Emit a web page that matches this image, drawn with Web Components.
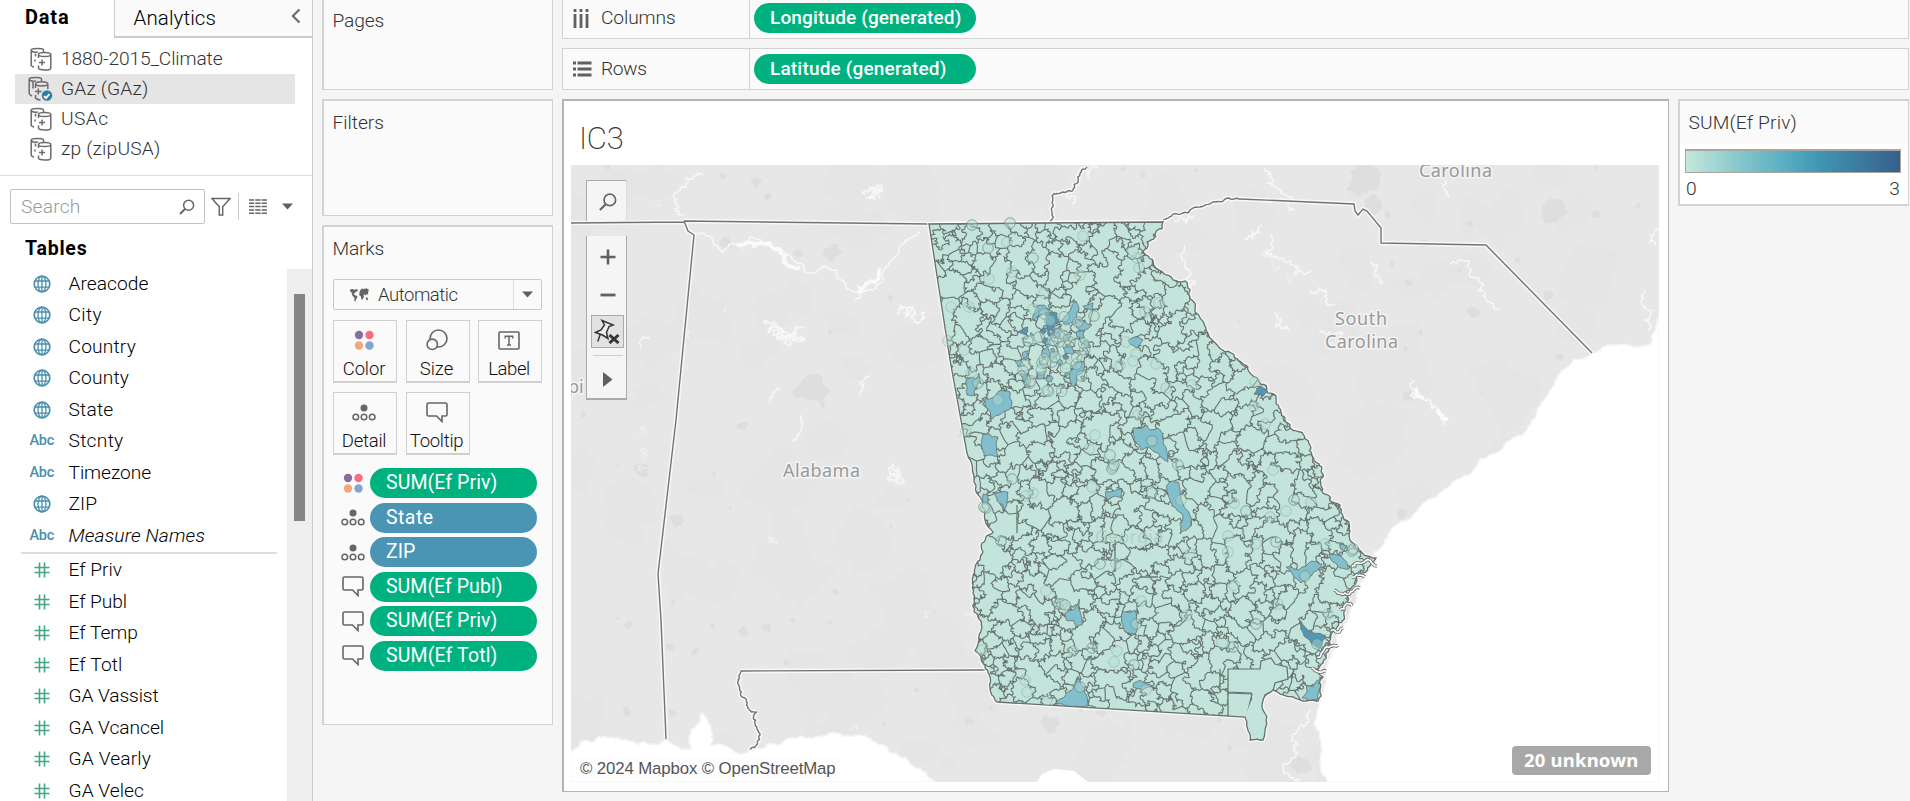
<!DOCTYPE html>
<html lang="en">
<head>
<meta charset="utf-8">
<title>IC3</title>
<style>
html,body{margin:0;height:801px;overflow:hidden;background:#f5f5f5}
body{font-family:Roboto,"Liberation Sans",sans-serif;font-weight:300;font-size:19.2px;color:#333}
</style>
</head>
<body>
<work-book></work-book>
<script>
const define = (name, html, setup) => customElements.define(name, class extends HTMLElement {
  connectedCallback() {
    if (this.shadowRoot) return;
    const root = this.attachShadow({mode: 'open'});
    const t = document.createElement('template');
    t.innerHTML = typeof html === 'function' ? html(this) : html;
    root.append(t.content.cloneNode(true));
    if (setup) setup(this, root);
  }
});

/* Text spaced out to a given width */
define('fit-text', e => `<style>:host{display:inline-block;white-space:pre;line-height:30px}</style><span>${e.getAttribute('text')}</span>`, (e, r) => {
  const s = r.querySelector('span'), w = +e.getAttribute('w');
  const n = e.getAttribute('text').length, now = s.getBoundingClientRect().width;
  if (w && now) s.style.letterSpacing = ((w + 1.5 - now) / n).toFixed(3) + 'px';
});

const globe = '<g fill="none" stroke="#4a8fae" stroke-width="1.3"><circle cx="9" cy="9" r="7.8" stroke-width="1.7"/><ellipse cx="9" cy="9" rx="4" ry="7.8"/><path d="M9 1v16M1.500 6h15M1.500 12.200h15"/></g>';
const dots4 = '<circle cx="5" cy="5" r="4.200" fill="#85709b"/><circle cx="15.500" cy="5" r="4.200" fill="#f96d80"/><circle cx="5" cy="15.500" r="4.200" fill="#f5a77c"/><circle cx="15.500" cy="15.500" r="4.200" fill="#82a6cd"/>';
const ICONS = {
  db: [22, 24, '<g fill="none" stroke="#6b6b6b" stroke-width="1.5"><path d="M4 20C2 19.500 1.200 19 1.200 18V3C1.200 .9 13.500 .9 13.500 3V5M1.200 3c0 2.300 5.300 2.600 7 1.900M5.500 6.500v3M5 12.500v2"/><path d="M8.500 11V7.500c0-2.700 12.300-2.700 12.300 0v13.700c0 2.400-12.300 2.400-12.300 0V18.500M8.500 7.500c0 2.700 12.300 2.700 12.300 0"/><path d="M9 15.500h6M12 12.500v6"/></g>'],
  dbon: [26, 26, '<g fill="none" stroke="#6b6b6b" stroke-width="1.500"><path d="M4 20C2 19 1.200 18.500 1.200 17.500V3C1.200 .9 13.500 .9 13.500 3V5M1.200 3c0 2.300 5.300 2.600 7 1.900M5 5.500v7"/><path d="M7.500 12V8c0-3 12.300-3 12.300 0v5M7.500 8c0 2.500 12.300 2.500 12.300 0M7.500 19v3c1 1.500 3 1.800 5 2"/><path d="M7 15.500h6.500M10.300 12.500v6"/></g><circle cx="19" cy="19.500" r="5.200" fill="#2f7ea4"/><path d="M16 20l2 2.200 3.500-4.200" fill="none" stroke="#fff" stroke-width="1.800"/>'],
  globe: [18, 18, globe],
  hash: [16, 16, '<path d="M5.500 .5v15M10.500 .5v15M.5 5.500h15M.5 10.500h15" stroke="#45a584" stroke-width="1.600"/>'],
  search: [16, 16, '<circle cx="9.600" cy="6.200" r="5" fill="none" stroke="#666" stroke-width="1.500"/><path d="M6 10L1 15" stroke="#666" stroke-width="2"/>'],
  funnel: [20, 20, '<path d="M1 1.500h18l-7.300 8.300V18H8.300V9.800z" fill="none" stroke="#666" stroke-width="1.500"/>'],
  list: [18, 15, '<path d="M0 1h18M0 4.300h18M0 7.600h18M0 10.900h18M0 14.200h18" stroke="#666" stroke-width="1.500" stroke-dasharray="5.300 1"/>'],
  caret: [11, 7, '<path d="M0 .5h11L5.500 6.500z" fill="#606060"/>'],
  back: [10, 16, '<path d="M8.500 1.500L1.800 8l6.700 6.500" fill="none" stroke="#666" stroke-width="2"/>'],
  cols: [16, 19, '<path d="M2 0v3M8 0v3M14 0v3M2 5v14M8 5v14M14 5v14" stroke="#606060" stroke-width="2.800"/>'],
  rows: [19, 16, '<path d="M0 2h3M4.500 2h14M0 8h3M4.500 8h14M0 14h3M4.500 14h14" stroke="#606060" stroke-width="2.800"/>'],
  world: [19, 14, '<path d="M0 1.500l2.500-.5 2 .8L7 1l1 1-1 1.500-1.500.5-.8 1.500-1-.2.5 1.500 1.800.8 1.500 1-.5 1.700-1 1-.6 2.400-.9-.5-.3-4L2.500 8 1.500 4.500 0 3zM9.500 4.500l.5-2 2-2L14 1l2.500-.8L19 2l-1 2 .3 1.700L17 7l-1-1.200L15.500 8 14.500 6.200 13.500 7 14 8.500l-1.500 3-1 .3-.7-3.500-1.600-1zM15.500 9.800l2-.3.8 2-1.500 1z" fill="#666"/>'],
  color: [21, 21, dots4],
  size: [22, 22, '<g fill="#fafafa" stroke="#666" stroke-width="1.600"><circle cx="12.500" cy="9.500" r="8.500"/><circle cx="6.300" cy="15.300" r="5.200"/></g>'],
  label: [22, 19, '<rect x="1" y="1" width="20" height="17" rx="1" fill="none" stroke="#666" stroke-width="1.600"/><path d="M7.300 7.500V5.200h7.400v2.300M11 5.200v8.600M9 14h4" fill="none" stroke="#666" stroke-width="1.500"/>'],
  detail: [24, 17, '<circle cx="12" cy="4" r="3.500" fill="#666"/><g fill="none" stroke="#666" stroke-width="1.500"><circle cx="3.800" cy="13" r="2.800"/><circle cx="12" cy="13" r="2.800"/><circle cx="20.200" cy="13" r="2.800"/></g>'],
  tip: [22, 21, '<path d="M2.500 1h17c1 0 1.500.5 1.500 1.500v10c0 1-.5 1.500-1.500 1.500H16v5.500L10.500 14h-8C1.500 14 1 13.500 1 12.500v-10C1 1.500 1.500 1 2.500 1z" fill="none" stroke="#666" stroke-width="1.600"/>'],
  plus: [16, 16, '<path d="M8 .5v15M.5 8h15" stroke="#606060" stroke-width="2.600"/>'],
  minus: [16, 4, '<path d="M.5 2h15" stroke="#606060" stroke-width="2.800"/>'],
  play: [10, 15, '<path d="M0 0l9.500 7.500L0 15z" fill="#606060"/>'],
  pin: [26, 25, '<path d="M8 1.500l11 4.500-4 1.500-2.500 6 1.500 6-5.500-3.500-7-2.500 5.500-2.500 3.500-5zM6.500 14.500L3.800 22.500" fill="#eee" stroke="#333" stroke-width="1.500"/><path d="M15.500 16l9 8M24.500 16l-9 8" stroke="#333" stroke-width="3"/>']
};
define('glyph-icon', e => {
  const [w, h, p] = ICONS[e.getAttribute('name')];
  return `<style>:host{display:inline-flex;flex:none}svg{display:block}</style><svg width="${w}" height="${h}" viewBox="0 0 ${w} ${h}">${p}</svg>`;
});

/* ---- Data pane ---- */
define('source-row', e => `<style>
:host{display:flex;align-items:center;height:30px;margin:0 17px 0 15px;color:#333}
:host([on]){background:#e5e5e5}
span{width:46px;display:flex;padding-left:15px;box-sizing:border-box}
:host([on]) span{padding-left:13px}
</style><span><glyph-icon name="${e.hasAttribute('on') ? 'dbon' : 'db'}"></glyph-icon></span><fit-text text="${e.getAttribute('text')}" w="${e.getAttribute('w')}"></fit-text>`);

define('field-row', e => `<style>
:host{display:flex;align-items:center;height:31.5px;color:#000}
:host([italic]) .n{font-style:italic}
span{width:68.500px;display:flex;box-sizing:border-box}
.i{padding-left:33px}.h{padding-left:34px}
.a{padding-left:29.500px;font-size:14.500px;font-weight:500;color:#4a8fae}
</style><span class="${e.getAttribute('kind')[0] === 'g' ? 'i' : e.getAttribute('kind')[0]}">${e.getAttribute('kind') === 'abc' ? '<fit-text text="Abc" w="23"></fit-text>' : `<glyph-icon name="${e.getAttribute('kind')}"></glyph-icon>`}</span><fit-text class="n" text="${e.getAttribute('text')}" w="${e.getAttribute('w')}"></fit-text>`);

const fields = (kind, list) => list.map(([t, w, k, it]) => `<field-row kind="${k || kind}" text="${t}" w="${w}" ${it ? 'italic' : ''}></field-row>`).join('');
define('data-pane', `<style>
:host{display:flex;flex-direction:column;width:312px;height:801px;background:#fff;border-right:1px solid #ccc;overflow:hidden}
.tabs{display:flex;height:38px;color:#000;font-size:20px}
.d{width:114px;padding:2px 0 0 25px;box-sizing:border-box;font-weight:700}
.an{flex:1;background:#fafafa;border-left:1px solid #ccc;border-bottom:2px solid #ccc;display:flex;justify-content:space-between;padding:3px 11px 0 18.500px;font-weight:300;font-size:20.500px}
.an glyph-icon{padding-top:5px}
.src{padding:6px 0 0;height:131px;border-bottom:1px solid #dedede}
.find{display:flex;align-items:center;padding:13px 0 0 10px;height:35px}
.box{width:195px;height:35px;box-sizing:border-box;border:1px solid #c2c2c2;border-radius:2px;display:flex;align-items:center;justify-content:space-between;padding:0 9px 0 10px;color:#999}
.sep{width:1px;height:27px;background:#ccc;margin:0 10px 0 7px}
.find .f{margin-left:6px}.find .c{margin-left:15px}
h3{margin:10px 0 0 25px;height:35px;font-size:19.500px;font-weight:700;color:#000}
.rows{display:flex;flex:1;min-height:0}
.list{width:287px;margin-top:-1px}
hr{border:0;height:2px;background:#ddd;margin:0 10px 1px 21px}
.bar{width:25px;background:#eee;padding:25px 0 0 7px;box-sizing:border-box}
.bar i{display:block;width:11px;height:227px;background:#858585}
</style>
<div class="tabs"><div class="d"><fit-text text="Data" w="43"></fit-text></div><div class="an"><fit-text text="Analytics" w="81"></fit-text><glyph-icon name="back"></glyph-icon></div></div>
<div class="src"><source-row text="1880-2015_Climate" w="160"></source-row><source-row on text="GAz (GAz)" w="86"></source-row><source-row text="USAc" w="46"></source-row><source-row text="zp (zipUSA)" w="98"></source-row></div>
<div class="find"><div class="box"><fit-text text="Search" w="58"></fit-text><glyph-icon name="search"></glyph-icon></div><glyph-icon class="f" name="funnel"></glyph-icon><div class="sep"></div><glyph-icon name="list"></glyph-icon><glyph-icon class="c" name="caret"></glyph-icon></div>
<h3><fit-text text="Tables" w="61"></fit-text></h3>
<div class="rows"><div class="list">${fields('globe', [['Areacode', 78.5], ['City', 32], ['Country', 66], ['County', 59], ['State', 43.5], ['Stcnty', 53.5, 'abc'], ['Timezone', 81, 'abc'], ['ZIP', 27], ['Measure Names', 135, 'abc', 1]])}<hr>${fields('hash', [['Ef Priv', 52], ['Ef Publ', 57], ['Ef Temp', 68], ['Ef Totl', 52.5], ['GA Vassist', 88.5], ['GA Vcancel', 94], ['GA Vearly', 81], ['GA Velec', 74]])}</div><div class="bar"><i></i></div></div>`);

/* ---- Cards and shelves ---- */
define('shelf-card', e => `<style>
:host{display:block;box-sizing:border-box;background:#fafafa;border:2px solid #d2d2d2;border-right-width:1px;border-bottom-width:1.500px}
.t{height:31px;padding:7px 0 0 8.500px}
</style><div class="t"><fit-text text="${e.getAttribute('label')}" w="${e.getAttribute('w')}"></fit-text></div><slot></slot>`);

define('field-pill', e => `<style>
:host{display:flex;align-items:center;box-sizing:border-box;height:30px;border-radius:15px;background:#00b180;color:#fff;font-weight:400;padding-left:16px}
:host([dim]){background:#4a95b4}
</style><fit-text text="${e.getAttribute('text')}" w="${e.getAttribute('w')}"></fit-text>`);

define('axis-shelf', e => `<style>
:host{display:flex;box-sizing:border-box;background:#fafafa;border:1.500px solid #d2d2d2;align-items:stretch}
.l{width:187px;border-right:1px solid #d2d2d2;display:flex;align-items:center;box-sizing:border-box;padding-left:10px}
.l span{width:28px;display:flex}
.p{display:flex;align-items:center;padding-left:4px}
field-pill{width:222px;font-weight:500;font-size:19px}
</style><div class="l"><span><glyph-icon name="${e.getAttribute('icon')}"></glyph-icon></span><fit-text text="${e.getAttribute('label')}" w="${e.getAttribute('w')}"></fit-text></div><div class="p"><field-pill text="${e.getAttribute('pill')}" w="${e.getAttribute('pw')}"></field-pill></div>`);

define('mark-button', e => `<style>
:host{display:flex;flex-direction:column;align-items:center;justify-content:space-between;box-sizing:border-box;width:64px;height:63px;border:1px solid #d0d0d0;border-right-width:1.500px;border-bottom-width:2px;color:#111;font-size:18.500px}
.g{height:40px;display:flex;align-items:center;margin-left:-2px}
fit-text{line-height:20px;margin:0 0 2px -2px}
</style><div class="g"><glyph-icon name="${e.getAttribute('icon')}"></glyph-icon></div><fit-text text="${e.getAttribute('text')}" w="${e.getAttribute('w')}"></fit-text>`);

define('mark-row', e => `<style>
:host{display:flex;align-items:center;height:30px}
.g{width:38px;padding-left:4px;box-sizing:border-box;display:flex;justify-content:center}
field-pill{width:167px}
</style><div class="g"><glyph-icon name="${e.getAttribute('icon')}"></glyph-icon></div><field-pill ${e.hasAttribute('dim') ? 'dim' : ''} text="${e.getAttribute('text')}" w="${e.getAttribute('w')}"></field-pill>`);

define('marks-card', `<style>
:host{display:block}
.sel{display:flex;align-items:center;margin:14px 0 0 9px;width:209px;height:31px;border:1px solid #c8c8c8;border-bottom-width:1.500px;border-radius:2px;box-sizing:border-box;font-size:18.500px}
.sel .w{margin:0 9px 0 16px}
.dd{margin-left:auto;width:27px;height:100%;border-left:1px solid #ddd;display:flex;align-items:center;justify-content:center}
.btns{display:grid;grid-template-columns:64px 64px 64px;gap:9px 8.500px;margin:10px 0 0 9px}
.rows{display:flex;flex-direction:column;gap:4.500px;margin:13px 0 0 8px;font-size:19.500px}
</style>
<div class="sel"><glyph-icon class="w" name="world"></glyph-icon><fit-text text="Automatic" w="78"></fit-text><div class="dd"><glyph-icon name="caret"></glyph-icon></div></div>
<div class="btns"><mark-button icon="color" text="Color" w="41"></mark-button><mark-button icon="size" text="Size" w="32"></mark-button><mark-button icon="label" text="Label" w="40"></mark-button><mark-button icon="detail" text="Detail" w="43"></mark-button><mark-button icon="tip" text="Tooltip" w="52"></mark-button></div>
<div class="rows"><mark-row icon="color" text="SUM(Ef Priv)" w="110"></mark-row><mark-row icon="detail" dim text="State" w="46"></mark-row><mark-row icon="detail" dim text="ZIP" w="28"></mark-row><mark-row icon="tip" text="SUM(Ef Publ)" w="115"></mark-row><mark-row icon="tip" text="SUM(Ef Priv)" w="110"></mark-row><mark-row icon="tip" text="SUM(Ef Totl)" w="110"></mark-row></div>`);

define('color-legend', `<style>
:host{display:block;box-sizing:border-box;width:231px;height:107px;background:#fff;border:2px solid #d2d2d2;border-right-width:1px}
.t{background:#fafafa;height:43px;padding:7px 0 0 8.500px;box-sizing:border-box}
.r{margin:5px 7px 0 5px;height:24px;box-sizing:border-box;border:1px solid #aaa69b;border-top-width:2px;background:linear-gradient(90deg,#c3e8dc,#84c5cd 26%,#51a9c0 50%,#3f93b2 64%,#3b759c 85%,#365f8c)}
.n{display:flex;justify-content:space-between;padding:1px 8px 0 6px}
</style><div class="t"><fit-text text="SUM(Ef Priv)" w="107"></fit-text></div><div class="r"></div><div class="n"><fit-text text="0"></fit-text><fit-text text="3"></fit-text></div>`);

/* ---- Map ---- */
const rng = s => () => { s |= 0; s = s + 0x6D2B79F5 | 0; let t = Math.imul(s ^ s >>> 15, 1 | s); t = t + Math.imul(t ^ t >>> 7, 61 | t) ^ t; return ((t ^ t >>> 14) >>> 0) / 4294967296; };
const P = s => s.trim().split(/\s+/).map(q => q.split(',').map(Number));
function wiggle(a, b, amp, rnd, min = 3.2) {
  const dx = b[0] - a[0], dy = b[1] - a[1], L = Math.hypot(dx, dy);
  if (L < min) return [b];
  const k = (rnd() - .5) * amp, m = [(a[0] + b[0]) / 2 - dy * k, (a[1] + b[1]) / 2 + dx * k];
  return [...wiggle(a, m, amp, rnd, min), ...wiggle(m, b, amp, rnd, min)];
}
function rough(pts, amp, rnd, min) { let o = [pts[0]]; for (let i = 1; i < pts.length; i++) o = o.concat(wiggle(pts[i - 1], pts[i], amp, rnd, min)); return o; }
const D = (p, z) => 'M' + p.map(q => q[0].toFixed(1) + ' ' + q[1].toFixed(1)).join('L') + (z ? 'z' : '');

function drawMap() {
  const R = rng(77);
  const east = P('1163,222 1147,242 1141,253 1155,267 1173,280 1185,281 1195,303 1200,318 1210,338 1225,352 1243,364 1257,378 1268,393 1279,408 1286,422 1300,432 1310,445 1319,464 1323,477 1323,493 1340,505 1349,522 1350,540 1355,548 1376,558 1370,566 1363,573 1355,574 1356,583 1350,590 1345,593 1348,597 1344,612 1337,627 1333,647 1326,653 1323,663 1318,670 1323,677 1320,690 1318,701');
  const south = P('1318,701 1303,701 1283,695 1273,690 1265,696 1262,707 1267,717 1265,730 1263,740 1250,740 1247,727 1245,717');
  const west = P('997,702 990,687 983,663 975,650 978,617 973,593 973,577 980,560 982,543 993,532 985,520 982,500 976,487 973,473 967,453');
  const ga = [[929, 224], ...rough(east, .5, R), ...rough(south, .2, R).slice(1), ...rough(west, .35, R), [950, 360], [929, 224]];

  /* postal areas: Voronoi cells, denser around Atlanta, some joined to a neighbour */
  const pts = [];
  for (let n = 0; n < 26000; n++) {
    const x = 905 + R() * 490, y = 200 + R() * 560;
    const d = Math.hypot(x - 1052, (y - 350) * .8);
    const v = Math.sin(x * .061 + y * .02) * Math.cos(y * .053 - x * .017) * .5 + .5;
    const r = (d < 35 ? 5.2 + d * .1 : d < 100 ? 8.2 + (d - 35) * .015 : 8.7) * (.72 + .85 * v);
    let ok = true;
    for (const q of pts) if (Math.hypot((q[0] - x) * 1.15, (q[1] - y) * .88) < r) { ok = false; break; }
    if (ok) pts.push([x, y]);
  }
  const grp = pts.map((_, i) => i), root = i => { while (grp[i] !== i) i = grp[i]; return i; };
  pts.forEach((p, i) => {
    if (R() > .5) return;
    const near = pts.map((q, j) => [Math.hypot(q[0] - p[0], q[1] - p[1]), j]).filter(q => q[0] < 26 && q[1] !== i).sort((a, b) => a[0] - b[0]);
    const t = near[Math.floor(R() * Math.min(3, near.length))];
    if (t) grp[root(i)] = root(t[1]);
  });
  let mesh = '';
  pts.forEach((p, i) => {
    let poly = [[p[0] - 45, p[1] - 45, -1], [p[0] + 45, p[1] - 45, -1], [p[0] + 45, p[1] + 45, -1], [p[0] - 45, p[1] + 45, -1]];
    pts.forEach((q, j) => {
      if (i === j || Math.abs(q[0] - p[0]) > 60 || Math.abs(q[1] - p[1]) > 60) return;
      const mx = (p[0] + q[0]) / 2, my = (p[1] + q[1]) / 2, nx = q[0] - p[0], ny = q[1] - p[1];
      const s = v => (v[0] - mx) * nx + (v[1] - my) * ny, out = [];
      for (let k = 0; k < poly.length; k++) {
        const a = poly[k], b = poly[(k + 1) % poly.length], sa = s(a), sb = s(b);
        const t = sa / (sa - sb), c = [a[0] + (b[0] - a[0]) * t, a[1] + (b[1] - a[1]) * t];
        if (sa <= 0) { out.push(a); if (sb > 0) out.push([...c, j]); }
        else if (sb <= 0) out.push([...c, a[2]]);
      }
      poly = out;
    });
    poly.forEach((a, k) => {
      if (a[2] > i && root(a[2]) !== root(i)) {
        const b = poly[(k + 1) % poly.length];
        mesh += D([a, ...wiggle(a, b, R() < .15 ? .1 : 1.15, R, 2.5)]);
      }
    });
  });

  /* terrain */
  let land = '', dark = '', lakes = '';
  const blob = (x, y, r) => { const n = 7, o = []; for (let i = 0; i < n; i++) { const a = i / n * 6.283, q = r * (.6 + R() * .7); o.push([x + Math.cos(a) * q, y + Math.sin(a) * q]); } o.push(o[0]); return D(rough(o, .6, R, 3), 1); };
  for (let i = 0; i < 150; i++) land += blob(571 + R() * 1088, 165 + R() * 617, 8 + R() * 30);
  for (let i = 0; i < 110; i++) dark += blob(571 + R() * 1088, 165 + R() * 617, 1.5 + R() * 4);
  [[812, 390, 15], [832, 252, 9], [1367, 180, 20], [1373, 205, 12], [1552, 211, 12], [1473, 312, 6], [676, 521, 8], [640, 470, 7], [1050, 726, 9], [725, 243, 6], [1300, 765, 12]].forEach(a => dark += blob(...a));
  const river = (s, amp = .9) => D(rough(P(s), amp, R, 2.5));
  const rivers = river('684,215 675,203 678,192 685,178 703,173') + river('695,233 703,233 722,252 745,242 773,248 793,260 808,273 837,270 860,290 893,260 920,232', .5) +
    river('860,290 855,300') + river('1245,240 1262,225') + river('1184,245 1190,275 1187,290') + river('1195,215 1175,220') + river('1270,235 1285,262 1310,270') + river('1310,290 1335,305') + river('1370,262 1382,285') + river('1450,265 1478,290 1500,310') + river('1320,333 1345,338') + river('640,348 650,338') + river('870,375 860,395') + river('780,390 768,402') + river('800,415 792,440') + river('1412,380 1425,400 1440,412 1446,425') + river('1190,325 1205,340 1215,352') + river('1275,312 1290,330') + river('1310,710 1298,745 1300,780') + river('1645,290 1648,310 1648,330') + river('1098,168 1090,178') + river('1660,230 1655,245') + river('1265,168 1282,190 1295,210') + river('1447,180 1450,197') +
    river('766,320 772,330 783,338 790,334 804,328', 1.6) + river('767,330 778,326 784,340', 1.6) + river('863,191 870,198 880,199', 1.6) + river('866,198 872,190 882,193', 1.6) + river('897,313 908,309 925,312', 1.3) + river('900,309 915,315', 1.3) + river('893,463 900,472 898,484 904,478', 1.5) + river('1065,193 1072,203', 1.4);
  const wide = river('737,245 748,242 760,243 773,248 785,256 800,268', .7) + river('860,293 870,282 881,270', .8) + river('1415,388 1424,398', .8) + river('1440,410 1448,420', .9);
  for (let i = 0; i < 30; i++) { const x = 571 + R() * 1088, y = 165 + R() * 617; lakes += D(rough([[x, y], [x + R() * 16 - 8, y + R() * 16 - 8], [x + R() * 20 - 10, y + R() * 20 - 6]], 1.2, R, 1.8)); }
  const atlantic = P('1659,316 1654,332 1650,345 1640,347 1620,345 1606,346 1593,352 1573,360 1561,372 1551,389 1540,406 1530,425 1512,439 1480,459 1452,482 1431,499 1409,520 1385,540 1374,552 1378,560 1366,574 1358,590 1350,612 1340,630 1336,645 1326,670 1324,690 1319,704 1321,745 1327,782');
  const ocean = D([...rough(atlantic, .3, R, 3), [1659, 782]], 1);
  const gulf = P('571,751 595,741 617,738 638,745 666,740 691,749 696,725 701,713 708,722 710,745 737,753 772,744 801,736 843,736 860,735 879,745 907,758 925,772 936,782');
  const bay = D([...rough(gulf, .4, R, 3), [571, 782]], 1);
  const borders = ['571,223 684,222', '684,221 929,224 1163,222', '684,221 688,231 694,235 676,420 658,574 661,620 666,739', '985,670 741,671'].map(s => D(P(s))).join('') +
    river('1049,223 1052,196 1063,192 1073,190 1078,180 1080,174 1087,167', .5) + river('1163,222 1188,213 1200,207 1216,202 1228,198 1240,199', .35) + D(P('1240,199 1354,204 1355,211 1358,215 1363,209 1367,211 1381,228 1381,243 1486,245 1592,353')) + river('741,671 738,680 745,698 757,712 760,735 750,749', .5);
  const sounds = ['1377,566 1362,563 1352,567', '1365,577 1352,577', '1360,588 1345,593 1334,590', '1352,606 1340,610', '1343,628 1331,630', '1338,645 1324,650 1318,657', '1326,671 1312,668'].map(s => river(s, .6)).join('');

  const L = '#82bfcd', K = '#5297b8';
  const areas = [
    [L, '1032,319 1037,306 1044,305 1053,312 1050,316 1042,314 1034,320'], [K, '1045,312 1057,313 1059,322 1053,327 1051,337 1048,335 1046,323'], [L, '1062,320 1068,313 1074,299 1079,310 1076,321 1065,325'], [K, '1018,332 1028,327 1026,335'],
    [L, '1076,319 1085,322 1092,325 1083,331 1077,328'], [L, '1083,306 1093,303 1092,310 1085,309'], [L, '1048,330 1059,330 1060,336 1051,338'], [L, '1076,332 1084,331 1084,338 1077,337'], [L, '1084,340 1091,347 1085,347'], [L, '1063,347 1072,346 1074,354 1065,354'], [L, '1042,350 1048,346 1050,357 1042,357'], [L, '1015,361 1021,360 1025,366 1018,367'],
    [L, '1070,372 1077,363 1084,362 1084,370 1077,376 1074,387 1070,381'], [L, '1020,373 1027,374 1029,384 1024,382'], [L, '1037,372 1046,371 1044,378 1037,379'],
    [L, '966,380 973,377 976,380 979,373 980,378 976,388 974,395 967,395'], [L, '985,399 992,398 999,391 1010,392 1011,408 1001,414 992,419 987,408'], [L, '983,434 990,434 992,437 998,437 998,456 984,456'],
    [L, '1133,428 1144,427 1147,425 1150,430 1157,428 1163,434 1163,444 1168,462 1158,453 1148,447 1141,450 1135,441'], [L, '1167,485 1172,481 1178,482 1180,490 1181,500 1189,513 1191,525 1180,534 1183,515 1172,506 1168,494'],
    [L, '994,493 1008,492 1007,503 1003,513 1003,505 997,501'], [L, '983,494 988,496 987,505 983,502'], [L, '1106,491 1121,489 1121,498 1115,496 1107,500'], [L, '1065,613 1073,610 1079,599 1082,618 1082,625 1076,627 1074,621 1066,620'],
    [L, '1123,612 1135,610 1138,626 1135,634 1125,632'], [L, '1053,705 1065,696 1078,678 1084,688 1088,706'], [L, '1133,684 1140,680 1152,686 1143,690 1133,687'],
    [K, '1300,621 1310,632 1325,637 1320,648 1311,643 1304,636'], [L, '1286,567 1298,570 1306,566 1310,562 1322,564 1313,573 1307,579 1301,583 1294,577'], [L, '1329,554 1341,556 1349,569 1340,568 1333,562'], [L, '1339,545 1347,546 1344,552'],
    [L, '1317,700 1302,698 1307,692 1306,685 1313,687 1322,676 1319,692'], [K, '1254,394 1260,386 1268,391 1263,396'], [L, '1128,340 1137,337 1143,340 1137,348 1130,344']
  ].map(([f, s]) => { const q = P(s); q.push(q[0]); return `<path fill="${f}" d="${D(rough(q, .25, R, 3), 1)}"/>`; }).join('');
  let small = ''; for (let i = 0; i < 16; i++) { const a = R() * 6.28, r = Math.sqrt(R()) * 32; small += `<path fill="${i % 4 ? L : K}" d="${blob(1051 + Math.cos(a) * r * .8, 352 + Math.sin(a) * r, 1.800 + R() * 2)}"/>`; }

  const ring = (x, y, o) => `<circle cx="${x}" cy="${y}" r="5.300" fill="#b9dfd5" fill-opacity=".4" stroke="#6d9188" stroke-opacity="${o}"/>`;
  let rings = P('972,225 1010,223 1033,258 1078,322 1094,316 1052,362 1042,363 1070,342 1059,342 978,383 1110,455 1152,441 1178,465 1012,479 1113,467 1112,469 1114,465 1001,541 1100,564 986,508 984,507 1059,604 1062,604 1065,605 1136,624 1305,576 1317,644 1092,648 1294,500 1276,542 1352,551 1353,549 1233,647 1080,687 1256,624 1134,665 988,248 1152,493 1039,337 1028,341 1246,511').map(q => ring(q[0], q[1], .75)).join('');
  rings += P('1083,236 1007,242 989,279 1080,275 1012,272 1139,268 951,307 969,307 948,341 964,350 971,373 1192,385 1138,415 1166,388 1156,364 1136,354 1133,361 1120,365 998,400 1095,435 1089,449 966,431 1273,470 1234,503 1270,517 1286,511 1325,544 1311,502 1256,544 1190,554 1228,536 1116,564 1234,585 1046,591 1278,604 1141,601 1187,615 1222,643 1073,651 1117,651 1114,662 1025,680 1027,692 1047,700 1146,690 982,650 1033,493 1026,496 1092,487 1228,552 1066,364 1181,500 1254,406 1265,424 1137,258 1133,251 1255,382 1145,312 1159,303 1044,293 1033,309 1126,342 1328,614').map(q => ring(q[0], q[1], .35)).join('');
  for (let i = 0; i < 24; i++) { const a = R() * 6.28, r = Math.sqrt(R()) * 45; rings += ring((1054 + Math.cos(a) * r * .8).toFixed(1), (357 + Math.sin(a) * r).toFixed(1), .6); }
  const GA = D(ga, 1);
  return `<svg width="1088" height="617" viewBox="571 165 1088 617">
<defs><clipPath id="ga"><path d="${GA}"/></clipPath></defs>
<rect x="571" y="165" width="1088" height="617" fill="#e7e7e7"/>
<path d="${land}" fill="#e4e4e4" opacity=".6"/><path d="${dark}" fill="#dedede"/>
<path d="${lakes}" fill="none" stroke="#f3f3f3" stroke-width="1"/>
<path d="${rivers}" fill="none" stroke="#f7f7f7" stroke-width="1.500"/><path d="${wide}" fill="none" stroke="#fafafa" stroke-width="3.500"/>
<path d="${ocean}${bay}" fill="#fff" stroke="#f5f5f5" stroke-width="1.500"/><path d="M1037 782l5-8 12-5 20 2 14 11z" fill="#fff"/>
<path d="${borders}" fill="none" stroke="#f8f8f8" stroke-width="4.500"/>
<path d="${borders}" fill="none" stroke="#737373" stroke-width="1.400"/>
<path d="${GA}" fill="#c3e4db" stroke="#fff" stroke-opacity=".7" stroke-width="4"/>
<path d="${GA}" fill="#c3e4db"/>
<g clip-path="url(#ga)"><path d="${mesh}" fill="none" stroke="#65716e" stroke-width="1.100"/>
<g stroke="#6b7774" stroke-width=".9">${areas}${small}</g>
<g fill="#c3e4db" stroke="#65716e" stroke-width="1.200"><path d="M1228 669h32l1-8 10-3 4 6 12 3 1 12-13 4-2 8-8 4-3 11-10-1-1-12-23-1z"/><path d="M1228 693l24 1-6 25-18-1z"/></g><path fill="#c3e4db" d="M1252 699l11 6 8 13-6 26h-18l-3-25z"/>
<path d="M1017 505v28M1115 540v32M1140 577h18M1220 669v22" fill="none" stroke="#6b7774" stroke-width="1.300"/></g>
<path d="${GA}" fill="none" stroke="#686f6d" stroke-width="1.300"/>
<path d="${sounds}" fill="none" stroke="#686f6d" stroke-width="3.400"/><path d="${sounds}" fill="none" stroke="#fff" stroke-width="1.600"/>
${rings}
<g font-family="Noto Sans,Open Sans,sans-serif" font-weight="400" font-size="18" fill="#999" stroke="#f4f4f4" stroke-width="3" paint-order="stroke" lengthAdjust="spacingAndGlyphs">
<text x="783" y="477" textLength="77">Alabama</text><text x="1335" y="325" textLength="52">South</text><text x="1325" y="348" textLength="73">Carolina</text><text x="1419" y="176.500" textLength="73">Carolina</text><text x="568" y="393">pi</text>
<text x="1095" y="543" textLength="68" stroke="none" fill="#a9cbc3" opacity=".75">Georgia</text></g></svg>`;
}

define('map-view', `<style>
:host{display:block;position:relative;width:1088px;height:617px;overflow:hidden}
svg{display:block}
.box{position:absolute;left:15px;width:41px;box-sizing:border-box;background:rgba(245,245,245,.94);border:1px solid #aaa;display:flex;flex-direction:column;align-items:center}
.s{top:15px;height:41px;border-bottom:0;border-right-color:#ddd;justify-content:center;padding:1px 0 0 2px}
.s glyph-icon{transform:scale(1.150)}
.z{top:71px;height:164px;border-top:0;border-bottom-width:2px;padding-left:2px}
.z .a{margin-top:13px}.z .b{margin-top:27.500px}
.pin{margin:18px 0 0 -1px;width:33px;height:33px;box-sizing:border-box;border:1px solid #aaa;background:#e2e2e2;display:flex;align-items:center;justify-content:center}
.z hr{border:0;height:1px;width:30px;background:#ccc;margin:7px 0 16px}
.cr{position:absolute;left:5px;bottom:2px;width:264px;height:23px;background:rgba(252,252,252,.8);font:400 16.800px/23px "Liberation Sans",sans-serif;color:#555;padding-left:4px;box-sizing:border-box}
.cr fit-text,.un fit-text{line-height:inherit}
.un{position:absolute;right:8px;bottom:7.500px;width:139px;height:29px;border-radius:4px;background:#a8a8a8;color:#fff;font:700 18.500px/28px "Noto Sans","Open Sans",sans-serif;padding-left:12px;box-sizing:border-box}
</style><div id="m"></div>
<div class="box s"><glyph-icon name="search"></glyph-icon></div>
<div class="box z"><glyph-icon class="a" name="plus"></glyph-icon><glyph-icon class="b" name="minus"></glyph-icon><div class="pin"><glyph-icon name="pin"></glyph-icon></div><hr><glyph-icon name="play"></glyph-icon></div>
<div class="cr"><fit-text text="© 2024 Mapbox © OpenStreetMap" w="254"></fit-text></div>
<div class="un"><fit-text text="20 unknown" w="113"></fit-text></div>`, (e, r) => { r.querySelector('#m').innerHTML = drawMap(); });

define('viz-panel', `<style>
:host{display:block;box-sizing:border-box;width:1107px;height:693px;background:#fff;border:2px solid #b4b4b4;border-right-width:1px;border-bottom-width:1.500px}
.t{height:64px;padding:18.500px 0 0 15px;box-sizing:border-box;font-size:31px;font-weight:200}
map-view{margin-left:7px}
</style><div class="t"><fit-text text="IC3" w="43"></fit-text></div><map-view></map-view>`);

define('work-book', `<style>
:host{display:flex;height:801px;width:1910px;overflow:hidden;background:#f5f5f5}
.side{width:231px;margin:0 9px;display:flex;flex-direction:column;gap:9px}
.pg{height:93px;margin-top:-3px}.fl{height:117px}.mk{height:500px}
.main{width:1347px;display:flex;flex-direction:column;gap:9px}
.c{height:42px;margin-top:-3px}.r{height:42px}
.low{display:flex;gap:9px;align-items:flex-start}
</style>
<data-pane></data-pane>
<div class="side"><shelf-card class="pg" label="Pages" w="50"></shelf-card><shelf-card class="fl" label="Filters" w="50"></shelf-card><shelf-card class="mk" label="Marks" w="50"><marks-card></marks-card></shelf-card></div>
<div class="main"><axis-shelf class="c" icon="cols" label="Columns" w="73" pill="Longitude (generated)" pw="190"></axis-shelf><axis-shelf class="r" icon="rows" label="Rows" w="44" pill="Latitude (generated)" pw="175"></axis-shelf>
<div class="low"><viz-panel></viz-panel><color-legend></color-legend></div></div>`);
</script>
</body>
</html>
